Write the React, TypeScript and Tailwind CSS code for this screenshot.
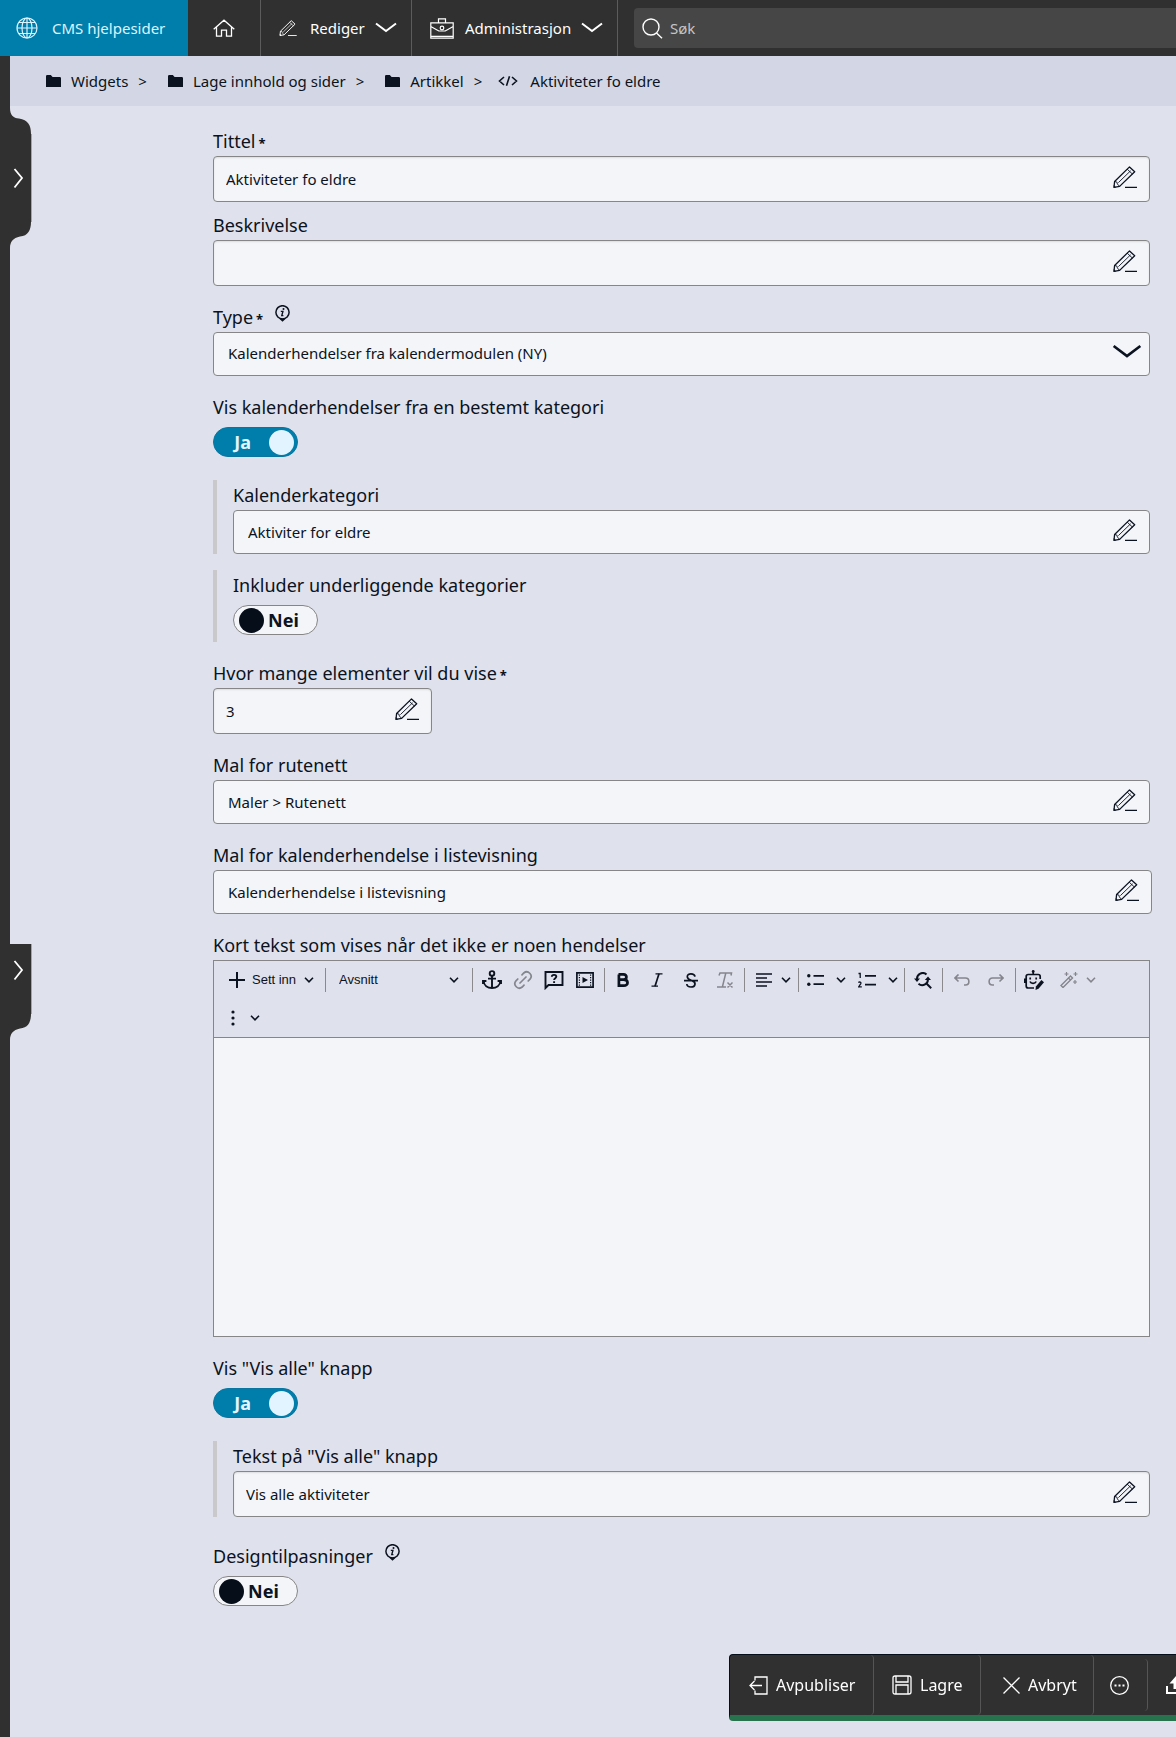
import { useState, type ReactNode } from "react";
import clsx from "clsx";

type IconProps = { className?: string };

const Stroke = ({
  className = "size-6",
  box = "0 0 24 24",
  width = 1.5,
  children,
}: IconProps & { box?: string; width?: number; children: ReactNode }) => (
  <svg
    viewBox={box}
    className={clsx("shrink-0", className)}
    fill="none"
    stroke="currentColor"
    strokeWidth={width}
    aria-hidden="true"
  >
    {children}
  </svg>
);

const PencilIcon = ({ className = "h-[22px] w-6" }: IconProps) => (
  <Stroke className={className} box="0 0 24 22" width={1.3}>
    <path d="M1 21.3 1.6 15.5 16.5.9l5.2 4.8L6.6 20.4Z" strokeLinejoin="round" />
    <path d="M1.6 15.5 3.8 16l.6 2 2.2 2.4M5.4 16.6 17.6 4.8M14.2 3.2l5.2 4.8" strokeWidth={0.9} />
    <path d="M.7 21.5V19l2.6 2.4Z" fill="currentColor" stroke="none" />
    <path d="M12 21.4h12" />
  </Stroke>
);

const ChevronIcon = ({ className = "h-3 w-[22px]" }: IconProps) => (
  <Stroke className={className} box="0 0 22 12" width={2}>
    <path d="m1 1.5 10 7.5 10-7.5" />
  </Stroke>
);

const SmallChevron = () => (
  <Stroke className="h-[6px] w-[10px]" box="0 0 10 6" width={1.6}>
    <path d="m1 .8 4 4 4-4" />
  </Stroke>
);

const GlobeIcon = () => (
  <Stroke className="size-[22px]" box="0 0 22 22" width={1.2}>
    <circle cx="11" cy="11" r="10" />
    <ellipse cx="11" cy="11" rx="5" ry="10" />
    <path d="M11 1v20M1 11h20M2.8 5.5h16.4M2.8 16.5h16.4" />
  </Stroke>
);

const HomeIcon = () => (
  <Stroke className="h-[18px] w-[22px]" box="0 0 22 18" width={1.3}>
    <path d="M.7 10.2 11 1.2l10.3 9M3.5 8v9.2h5v-6h5v6h5V8" />
  </Stroke>
);

const BriefcaseIcon = () => (
  <Stroke className="h-[21px] w-6" box="0 0 24 21" width={1.2}>
    <path d="M.8 4.8h22.4v15.4H.8ZM8.5 4.5V.8h7v3.7M.8 8.5l8 4.5h6.4l8-4.5M.8 18.3h22.4" />
    <circle cx="12" cy="10" r="1.8" />
  </Stroke>
);

const SearchIcon = () => (
  <Stroke className="size-[21px]" box="0 0 21 21" width={1.4}>
    <circle cx="9" cy="9" r="8" />
    <path d="m14.5 15 5.5 5.2" />
  </Stroke>
);

const FolderIcon = () => (
  <svg viewBox="0 0 15 12" className="h-3 w-[15px]" fill="currentColor" aria-hidden="true">
    <path d="M0 1.2Q0 0 1.2 0h3.6l1.8 2h7.2Q15 2 15 3.2V12H0Z" />
  </svg>
);

const CodeIcon = () => (
  <Stroke className="h-[10px] w-5" box="0 0 20 10" width={1.6}>
    <path d="M6 1 1.5 5 6 9M14 1l4.5 4L14 9M11.5.3l-3 9.4" />
  </Stroke>
);

const InfoIcon = () => (
  <Stroke className="h-[17px] w-[15px]" box="0 0 15 17" width={1.5}>
    <circle cx="7.5" cy="7.3" r="6.6" />
    <path d="m4 13.4 3.5 3.4 3.5-3.4Z" fill="currentColor" stroke="none" />
    <path d="M5.8 6.4h2.1L6.8 10.6h1.6" strokeWidth={1.4} />
    <circle cx="8.5" cy="3.9" r="1" fill="currentColor" stroke="none" />
  </Stroke>
);

const Label = ({
  id,
  required,
  info,
  children,
}: {
  id: string;
  required?: boolean;
  info?: boolean;
  children: ReactNode;
}) => (
  <div className="mb-[2px] flex h-[26px] text-[18px] leading-[26px]">
    <label htmlFor={id}>
      {children}
      {required && <span className="ml-[3px] text-[13px] leading-none font-bold">*</span>}
    </label>
    {info && (
      <button type="button" aria-label="Informasjon" className="ml-3 self-start pt-px">
        <InfoIcon />
      </button>
    )}
  </div>
);

const TextField = ({
  id,
  label,
  value,
  required,
  picker,
  narrow,
}: {
  id: string;
  label: string;
  value: string;
  required?: boolean;
  picker?: boolean;
  narrow?: boolean;
}) => (
  <div>
    <Label id={id} required={required}>
      {label}
    </Label>
    <div
      className={clsx(
        "flex items-center rounded-[4px] border border-[#868686] bg-[#f3f5f9] pr-3",
        picker ? "h-11 pl-[14px]" : "h-[46px] pl-3 shadow-[inset_0_1px_2px_#0000001a]",
        narrow && "w-[219px]"
      )}
    >
      <input
        id={id}
        type="text"
        defaultValue={value}
        className="min-w-0 flex-1 bg-transparent text-[15px] outline-none"
      />
      <button type="button" aria-label={`Rediger ${label}`} className="pb-1">
        <PencilIcon />
      </button>
    </div>
  </div>
);

const Toggle = ({
  id,
  label,
  on,
  info,
}: {
  id: string;
  label: string;
  on?: boolean;
  info?: boolean;
}) => {
  const [checked, setChecked] = useState(!!on);
  return (
    <div className="flex flex-col">
      <Label id={id} info={info}>
        {label}
      </Label>
      <label
        className={clsx(
          "relative mt-[5px] flex h-[30px] w-[85px] cursor-pointer items-center rounded-full border text-[18px] font-bold",
          checked
            ? "justify-end border-[#0a76a0] bg-[#007eab] pr-[3px] text-[#e1f4ff]"
            : "border-[#868686] bg-[#f3f5f9] pl-[5px]"
        )}
      >
        <input
          id={id}
          type="checkbox"
          role="switch"
          checked={checked}
          onChange={(e) => setChecked(e.target.checked)}
          className="absolute inset-0 cursor-pointer appearance-none"
        />
        {checked && <span className="mr-[18px]">Ja</span>}
        <span
          className={clsx("size-[25px] rounded-full", checked ? "bg-[#e1f4ff]" : "bg-[#060e19]")}
        />
        {!checked && <span className="ml-1">Nei</span>}
      </label>
    </div>
  );
};

const Nested = ({ className, children }: { className?: string; children: ReactNode }) => (
  <div className={clsx("border-l-4 border-[#c9c9cc] pt-[2px] pl-4", className)}>{children}</div>
);

const Group = ({ className, children }: { className?: string; children: ReactNode }) => (
  <div className={clsx("flex h-6 items-center border-r border-[#8a8a8e]", className)}>
    {children}
  </div>
);

const Tool = ({
  label,
  className = "w-[31px]",
  children,
}: {
  label: string;
  className?: string;
  children: ReactNode;
}) => (
  <button
    type="button"
    title={label}
    aria-label={label}
    className={clsx("flex h-6 shrink-0 items-center justify-center", className)}
  >
    {children}
  </button>
);

const Editor = () => (
  <div className="border border-[#868686]">
    <div className="border-b border-[#868686] font-['Liberation_Sans',Arial,sans-serif] text-[13px]">
      <div className="flex h-[38px] items-center">
        <Group className="w-[112px] pl-[15px]">
          <button type="button" className="flex items-center">
            <Stroke className="size-4" box="0 0 16 16" width={2}>
              <path d="M8 0v16M0 8h16" />
            </Stroke>
            <span className="mr-2 ml-[7px]">Sett inn</span>
            <SmallChevron />
          </button>
        </Group>
        <Group className="relative w-[147px] pl-[13px]">
          <select aria-label="Avsnittsformat" className="h-6 flex-1 appearance-none bg-transparent outline-none">
            <option>Avsnitt</option>
          </select>
          <span className="pointer-events-none absolute right-[13px]">
            <SmallChevron />
          </span>
        </Group>
        <Group className="w-[132px] px-[3px]">
          <Tool label="Anker">
            <Stroke className="size-5" box="0 0 20 20" width={1.9}>
              <circle cx="10" cy="3.4" r="2.3" />
              <path d="M10 5.8V18M6 8.6h8M1.6 11c.4 4.400 3.800 7 8.400 7s8-2.600 8.400-7M1 14v-3h3.400M19 14v-3h-3.400" />
            </Stroke>
          </Tool>
          <Tool label="Lenke" className="w-[31px] text-[#85858d]">
            <Stroke className="size-5" box="0 0 20 20" width={1.7}>
              <path d="M9 4.8 10.8 3a4.4 4.4 0 0 1 6.2 6.2L15.2 11M11 15.2 9.2 17A4.4 4.4 0 0 1 3 10.8L4.8 9M7 13l6-6" strokeLinecap="round" />
            </Stroke>
          </Tool>
          <Tool label="Hjelpetekst">
            <Stroke className="size-5" box="0 0 20 20" width={1.9}>
              <path d="M1.5 18V2h17v13H4.5Z" />
              <path d="M7.8 6.7c.2-2.6 4.6-2.3 4.500.1-.1 1.400-2.200 1.500-2.200 3.200M10.100 11.300v1.700" />
            </Stroke>
          </Tool>
          <Tool label="Media">
            <Stroke className="h-4 w-[18px]" box="0 0 18 16" width={1.7}>
              <path d="M.9.9h16.200v14.200H.9Z" />
              <path d="M3.400 2.500v12M14.600 2.500v12" strokeDasharray="1.300 1.200" strokeWidth={1.2} />
              <path d="M6.500 5v6l5.500-3Z" fill="currentColor" stroke="none" />
            </Stroke>
          </Tool>
        </Group>
        <Group className="w-[140px] px-px">
          <Tool label="Fet" className="w-[34px]">
            <Stroke className="h-[14px] w-3" box="0 0 12 14" width={2.7}>
              <path d="M1.5 1.4H6.5c4 0 3.8 5.3 0 5.3H1.5M6.5 6.7c5.4 0 5.3 5.9.3 5.9H1.9V1.4" />
            </Stroke>
          </Tool>
          <Tool label="Kursiv" className="w-[34px]">
            <Stroke className="h-[14px] w-3" box="0 0 12 14" width={1.2}>
              <path d="M4.5.8h7M.5 13.2h6.5" />
              <path d="M8 .8 4 13.2" strokeWidth={1.7} />
            </Stroke>
          </Tool>
          <Tool label="Gjennomstreking" className="w-[34px]">
            <Stroke className="h-[15px] w-[14px]" box="0 0 14 15" width={1.7}>
              <path d="M0 7.6h14M11 3.6C10.5.2 3.3-.2 3.3 3.7c0 2.6 3 3.2 4.7 3.9 4.8 1.8 3.4 6.400-1 6.400-2.500 0-4-1.200-4.200-3" />
            </Stroke>
          </Tool>
          <Tool label="Fjern formatering" className="w-[34px] text-[#85858d]">
            <Stroke className="size-4" box="0 0 16 16" width={1.5}>
              <path d="M2 3.5 3 1h11.500L14 3.5M8.800 1 5.500 14.500M0 15h9M10.500 10.500l5 5M15.500 10.500l-5 5" />
            </Stroke>
          </Tool>
        </Group>
        <Group className="w-[54px] pl-2">
          <Tool label="Juster" className="w-[22px]">
            <Stroke className="h-[14px] w-4" box="0 0 16 14" width={1.7}>
              <path d="M0 1h16M0 5h11M0 9h16M0 13h11" />
            </Stroke>
          </Tool>
          <Tool label="Flere justeringer" className="w-[22px]">
            <SmallChevron />
          </Tool>
        </Group>
        <Group className="w-[106px] pl-[3px]">
          <Tool label="Punktliste" className="w-[26px]">
            <Stroke className="h-3 w-[17px]" box="0 0 17 12" width={1.7}>
              <path d="M6.5 1.8H17M6.5 10.2H17" />
              <circle cx="1.8" cy="1.8" r="1.7" fill="currentColor" stroke="none" />
              <circle cx="1.8" cy="10.2" r="1.7" fill="currentColor" stroke="none" />
            </Stroke>
          </Tool>
          <Tool label="Flere punktlister" className="w-[26px]">
            <SmallChevron />
          </Tool>
          <Tool label="Nummerert liste" className="w-[26px]">
            <Stroke className="h-4 w-[18px]" box="0 0 18 16" width={1.7}>
              <path d="M7 3.8h11M7 12.600h11" />
              <path d="M.5 1.5h1.7V6M.4 10.600c.8-1 3-.6 2.400 1L.6 14.900h3.200" strokeWidth={1.3} />
            </Stroke>
          </Tool>
          <Tool label="Flere nummererte lister" className="w-[26px]">
            <SmallChevron />
          </Tool>
        </Group>
        <Group className="w-[38px]">
          <Tool label="Søk og erstatt" className="w-[36px]">
            <Stroke className="h-[17px] w-[18px]" box="0 0 18 17" width={2}>
              <path d="M12.5 2.5A5.700 5.700 0 0 0 3 7M4.500 11.800A5.700 5.700 0 0 0 13.800 6.500M12 11l5.200 5.200" />
              <path d="m0 6.600 3 3.300 3-3.300ZM10.800 8 14 4.500 17 8Z" fill="currentColor" stroke="none" />
            </Stroke>
          </Tool>
        </Group>
        <Group className="w-[73px] px-[2px] text-[#85858d]">
          <Tool label="Angre" className="w-[34px]">
            <Stroke className="h-3 w-4" box="0 0 16 12" width={1.6}>
              <path d="M4.500.5 1 4l3.500 3.500M1 4h10.500c4.500 0 4.500 7 0 7H10" />
            </Stroke>
          </Tool>
          <Tool label="Gjør om" className="w-[34px]">
            <Stroke className="h-3 w-4" box="0 0 16 12" width={1.6}>
              <path d="M11.500.5 15 4l-3.500 3.500M15 4H4.500C0 4 0 11 4.500 11H6" />
            </Stroke>
          </Tool>
        </Group>
        <Tool label="Assistent" className="w-9">
          <Stroke className="size-5" box="0 0 20 20" width={1.7}>
            <path d="M10 18H4.200Q2.200 18 2.200 16V6.500Q2.200 4.500 4.200 4.500h10Q16.200 4.500 16.200 6.500V9M9.200 4.500V1.500M.8 8.500v4.500M6 11.500c1 2.600 5 2.600 6.200 0" />
            <path d="M6.200 7.500v2M12.200 7.500v2" />
            <circle cx="9.200" cy="1.400" r="1.400" fill="currentColor" stroke="none" />
            <path d="m11.500 20 .4-3.400 5.500-6.600 2.600 2.200-5.500 6.600Z" fill="currentColor" stroke="none" />
          </Stroke>
        </Tool>
        <Tool label="Tryllestav" className="w-[34px] text-[#85858d]">
          <Stroke className="h-4 w-[18px]" box="0 0 18 16" width={1.4}>
            <path d="M1 13.500 10.500 4l2 2L3 15.500ZM8.500 6l2 2" />
            <path d="M6.500 0v4M4.500 2h4M15.500 0v4M13.500 2h4M15 8v4M13 10h4" strokeWidth={1.2} />
          </Stroke>
        </Tool>
        <Tool label="Flere forslag" className="w-[10px] text-[#85858d]">
          <SmallChevron />
        </Tool>
      </div>
      <div className="flex h-[38px] items-center pl-[10px]">
        <Tool label="Mer" className="w-[18px]">
          <svg viewBox="0 0 4 16" className="h-4 w-1" fill="currentColor" aria-hidden="true">
            <circle cx="2" cy="2" r="1.600" />
            <circle cx="2" cy="8" r="1.600" />
            <circle cx="2" cy="14" r="1.600" />
          </svg>
        </Tool>
        <Tool label="Flere valg" className="w-[26px]">
          <SmallChevron />
        </Tool>
      </div>
    </div>
    <textarea
      id="tomtekst"
      className="block h-[298px] w-full resize-none bg-[#f3f5f9] p-3 text-[15px] outline-none"
    />
  </div>
);

const navCell = "flex items-center border-r border-[#5c5c5c]";

const Header = () => (
  <header className="flex h-14 bg-[#303030] text-[15px] text-white">
    <a href="#" className="flex w-[188px] shrink-0 items-center gap-[14px] bg-[#007eab] pl-4 text-[#dcf4ff]">
      <GlobeIcon />
      CMS hjelpesider
    </a>
    <nav className="flex shrink-0">
      <a href="#" aria-label="Hjem" className={clsx(navCell, "w-[73px] justify-center")}>
        <HomeIcon />
      </a>
      <button type="button" className={clsx(navCell, "w-[151px] pl-[18px]")}>
        <PencilIcon className="h-4 w-[18px]" />
        <span className="mr-[10px] ml-[13px]">Rediger</span>
        <ChevronIcon />
      </button>
      <button type="button" className={clsx(navCell, "w-[206px] pl-[18px]")}>
        <BriefcaseIcon />
        <span className="mr-[10px] ml-[11px]">Administrasjon</span>
        <ChevronIcon />
      </button>
    </nav>
    <label className="my-2 ml-4 flex flex-1 items-center gap-[7px] rounded-l-[4px] bg-[#464646] pl-2">
      <SearchIcon />
      <input
        type="search"
        placeholder="Søk"
        aria-label="Søk"
        className="min-w-0 flex-1 bg-transparent outline-none placeholder:text-[#c4c4c4]"
      />
    </label>
  </header>
);

const crumbs = ["Widgets", "Lage innhold og sider", "Artikkel"];

const Breadcrumb = () => (
  <nav aria-label="Brødsmulesti" className="flex h-[50px] items-center bg-[#d3d7e5] pl-[36px] text-[15px]">
    {crumbs.map((crumb) => (
      <div key={crumb} className="flex items-center">
        <a href="#" className="flex items-center gap-[10px]">
          <FolderIcon />
          {crumb}
        </a>
        <span className="mr-[21px] ml-[10px]">&gt;</span>
      </div>
    ))}
    <a href="#" className="-ml-[5px] flex items-center gap-3">
      <CodeIcon />
      Aktiviteter fo eldre
    </a>
  </nav>
);

const SideRail = () => (
  <aside className="relative w-[10px] shrink-0 bg-[#303030]">
    <button type="button" aria-label="Åpne innholdspanel" className="absolute top-[52px] left-0">
      <svg viewBox="0 0 32 140" className="h-[140px] w-8" fill="none" aria-hidden="true">
        <path
          d="M9 0h1C10 7 13 10 19 10.500 28 12 31 17 31 26V114C31 122 28 128 20 128.500 13 130 10 134 10 140H9Z"
          fill="#303030"
        />
        <path d="M31.500 26v88" stroke="#a3a4aa" />
        <path d="m14.500 61 7.500 9-7.500 9.500" stroke="#fff" strokeWidth="1.800" />
      </svg>
    </button>
    <button type="button" aria-label="Åpne verktøypanel" className="absolute top-[888px] left-0">
      <svg viewBox="0 0 32 96" className="h-24 w-8" fill="none" aria-hidden="true">
        <path d="M9 0h22V70C31 78 28 84 20 84.500 13 86 10 90 10 96H9Z" fill="#303030" />
        <path d="M31.500 0v70" stroke="#a3a4aa" />
        <path d="m14.500 17 7.500 9-7.500 9.500" stroke="#fff" strokeWidth="1.800" />
      </svg>
    </button>
  </aside>
);

const actionCell =
  "flex items-center gap-2 rounded-r-[4px] border-r border-[#555] text-[16px]";

const ActionBar = () => (
  <div className="fixed right-0 bottom-4 flex h-[67px] rounded-l-[4px] border-t border-b-6 border-l border-t-[#060e19] border-b-[#26734d] border-l-[#060e19] bg-[#303030] text-white">
    <button type="button" className={clsx(actionCell, "w-36 pl-[19px]")}>
      <Stroke className="h-[19px] w-[19px]" box="0 0 19 19" width={1.3}>
        <path d="M6 4.500V1h12v17H6v-3.500M13 9.500H1M5.500 5 1 9.500 5.500 14" />
      </Stroke>
      Avpubliser
    </button>
    <button type="button" className={clsx(actionCell, "w-[107px] pl-[18px]")}>
      <Stroke className="size-5" box="0 0 20 20" width={1.3}>
        <path d="M1 3q0-2 2-2h14q2 0 2 2v14q0 2-2 2H3q-2 0-2-2ZM4 1v6h12V1M4 19v-9h12v9" />
      </Stroke>
      Lagre
    </button>
    <button type="button" className={clsx(actionCell, "w-[113px] pl-[22px]")}>
      <Stroke className="size-[17px]" box="0 0 17 17" width={1.3}>
        <path d="m.5.5 16 16M16.500.5l-16 16" />
      </Stroke>
      Avbryt
    </button>
    <button
      type="button"
      aria-label="Flere handlinger"
      className="my-1 flex w-[54px] items-center rounded-r-[4px] border-r border-[#555] pl-4"
    >
      <Stroke className="size-[19px]" box="0 0 19 19" width={1.3}>
        <circle cx="9.5" cy="9.5" r="8.8" />
        <path d="M4.500 9.500h2M8.500 9.500h2M12.500 9.500h2" strokeWidth={2} />
      </Stroke>
    </button>
    <button type="button" aria-label="Publiser" className="flex w-7 items-center overflow-hidden pl-[18px]">
      <svg viewBox="0 0 20 18" className="h-[18px] w-5 shrink-0" fill="currentColor" aria-hidden="true">
        <path d="M10 0 3.500 7.500H7.500V13h5V7.500h4ZM0 10h2v6h16v-6h2v8H0Z" />
      </svg>
    </button>
  </div>
);

export default function App() {
  return (
    <div className="flex min-h-screen flex-col bg-[#dfe1ec] font-['Noto_Sans',sans-serif] text-[#0b1220]">
      <Header />
      <div className="flex flex-1">
        <SideRail />
        <main className="min-w-0 flex-1">
          <Breadcrumb />
          <form className="flex flex-col pt-[22px] pr-[26px] pb-24 pl-[203px]">
            <TextField id="tittel" label="Tittel" value="Aktiviteter fo eldre" required />
            <div className="mt-[10px]">
              <TextField id="beskrivelse" label="Beskrivelse" value="" />
            </div>
            <div className="mt-[18px]">
              <Label id="type" required info>
                Type
              </Label>
              <div className="relative">
                <select
                  id="type"
                  className="h-11 w-full appearance-none rounded-[4px] border border-[#868686] bg-[#f3f5f9] pb-[2px] pl-[14px] text-[15px] outline-none"
                >
                  <option>Kalenderhendelser fra kalendermodulen (NY)</option>
                </select>
                <span className="pointer-events-none absolute top-3 right-2">
                  <ChevronIcon className="h-4 w-[30px]" />
                </span>
              </div>
            </div>
            <div className="mt-[18px]">
              <Toggle id="bestemt" label="Vis kalenderhendelser fra en bestemt kategori" on />
            </div>
            <Nested className="mt-[23px]">
              <TextField id="kategori" label="Kalenderkategori" value="Aktiviter for eldre" picker />
            </Nested>
            <Nested className="mt-4 pb-[7px]">
              <Toggle id="inkluder" label="Inkluder underliggende kategorier" />
            </Nested>
            <div className="mt-[18px]">
              <TextField id="antall" label="Hvor mange elementer vil du vise" value="3" required narrow />
            </div>
            <div className="mt-[18px]">
              <TextField id="rutenett" label="Mal for rutenett" value="Maler > Rutenett" picker />
            </div>
            <div className="mt-[18px] -mr-[2px]">
              <TextField
                id="listevisning"
                label="Mal for kalenderhendelse i listevisning"
                value="Kalenderhendelse i listevisning"
                picker
              />
            </div>
            <div className="mt-[18px]">
              <Label id="tomtekst">Kort tekst som vises når det ikke er noen hendelser</Label>
              <Editor />
            </div>
            <div className="mt-[18px]">
              <Toggle id="visalle" label={'Vis "Vis alle" knapp'} on />
            </div>
            <Nested className="mt-[23px]">
              <TextField id="knapptekst" label={'Tekst på "Vis alle" knapp'} value="Vis alle aktiviteter" />
            </Nested>
            <div className="mt-[26px]">
              <Toggle id="design" label="Designtilpasninger" info />
            </div>
          </form>
        </main>
      </div>
      <ActionBar />
    </div>
  );
}
